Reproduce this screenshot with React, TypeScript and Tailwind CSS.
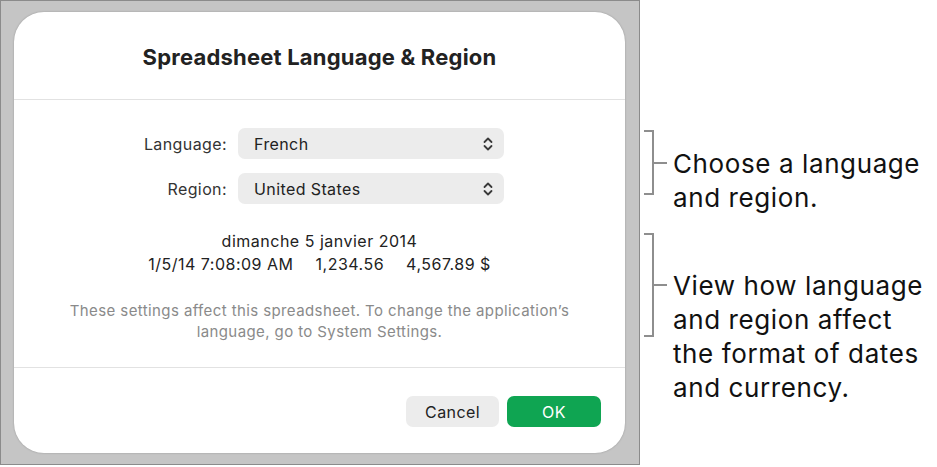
import { useState } from 'react';

function Chevrons() {
  return (
    <svg width="10" height="16" viewBox="0 0 10 16" fill="none" stroke="#3a3a3a" strokeWidth="1.8" strokeLinecap="round" strokeLinejoin="round">
      <path d="M1.5 6 L5 2.5 L8.5 6" />
      <path d="M1.5 10 L5 13.5 L8.5 10" />
    </svg>
  );
}

function PopUp({ value }: { value: string }) {
  return (
    <button className="flex h-[31px] w-[266px] items-center justify-between rounded-[7px] bg-[#ececec] pl-[16px] pr-[11px] text-[16px] tracking-[0.4px] text-[#222]">
      <span>{value}</span>
      <Chevrons />
    </button>
  );
}

function Bracket({ height, lines, offset }: { height: number; lines: string[]; offset: string }) {
  return (
    <div className="flex items-start">
      <div className="flex items-center">
        <div className="w-[10px] border-y-2 border-r-2 border-[#8e8e8e]" style={{ height }} />
        <div className="h-[2px] w-[13px] bg-[#8e8e8e]" />
      </div>
      <div className={`ml-[6px] text-[26px] leading-[34px] tracking-[0.6px] text-[#111] ${offset}`}>
        {lines.map((l) => (
          <div key={l}>{l}</div>
        ))}
      </div>
    </div>
  );
}

export default function App() {
  const [language] = useState('French');
  const [region] = useState('United States');

  return (
    <div className="flex h-[467px] w-[937px] bg-white" style={{ fontFamily: 'Inter, "Noto Sans", sans-serif' }}>
      {/* Window backdrop */}
      <div className="h-[465px] w-[640px] shrink-0 border border-[#8b8b8b] bg-[#c5c5c5] pl-[13px] pr-[14px] pt-[11px]">
        {/* Dialog */}
        <div className="flex h-[441px] w-[611px] flex-col rounded-[30px] bg-white shadow-[0_0_2px_rgba(0,0,0,0.25)]">
          <div className="h-[87px] pt-[31px] text-center text-[22px] font-bold leading-[28px] tracking-[0.2px] text-[#222]">
            Spreadsheet Language &amp; Region
          </div>
          <div className="h-px bg-[#e2e2e2]" />

          <div className="flex flex-col gap-[14px] pt-[28px]">
            <div className="flex items-center">
              <label className="w-[224px] pr-[11px] text-right text-[16px] tracking-[0.4px] text-[#333]">Language:</label>
              <PopUp value={language} />
            </div>
            <div className="flex items-center">
              <label className="w-[224px] pr-[11px] text-right text-[16px] tracking-[0.4px] text-[#333]">Region:</label>
              <PopUp value={region} />
            </div>
          </div>

          <div className="mt-[26px] text-center text-[16px] leading-[23px] tracking-[0.5px] text-[#222]">
            <div>dimanche 5 janvier 2014</div>
            <div className="flex justify-center gap-[22px]">
              <span>1/5/14 7:08:09 AM</span>
              <span>1,234.56</span>
              <span>4,567.89 $</span>
            </div>
          </div>

          <p className="mt-[24px] text-center text-[15px] leading-[21px] tracking-[0.4px] text-[#8a8a8a]">
            These settings affect this spreadsheet. To change the application’s
            <br />
            language, go to System Settings.
          </p>

          <div className="mt-[25px] h-px bg-[#e2e2e2]" />

          <div className="flex justify-end gap-[8px] pr-[24px] pt-[28px]">
            <button className="h-[31px] w-[93px] rounded-[7px] bg-[#ececec] text-[16px] tracking-[0.4px] text-[#222]">Cancel</button>
            <button className="h-[31px] w-[94px] rounded-[7px] bg-[#0fa552] text-[16px] tracking-[0.4px] text-white">OK</button>
          </div>
        </div>
      </div>

      {/* Callouts */}
      <div className="ml-[4px] flex flex-col pt-[130px]">
        <Bracket height={65} lines={['Choose a language', 'and region.']} offset="mt-[17px]" />
        <div className="mt-[18px]">
          <Bracket
            height={104}
            lines={['View how language', 'and region affect', 'the format of dates', 'and currency.']}
            offset="mt-[36px]"
          />
        </div>
      </div>
    </div>
  );
}
